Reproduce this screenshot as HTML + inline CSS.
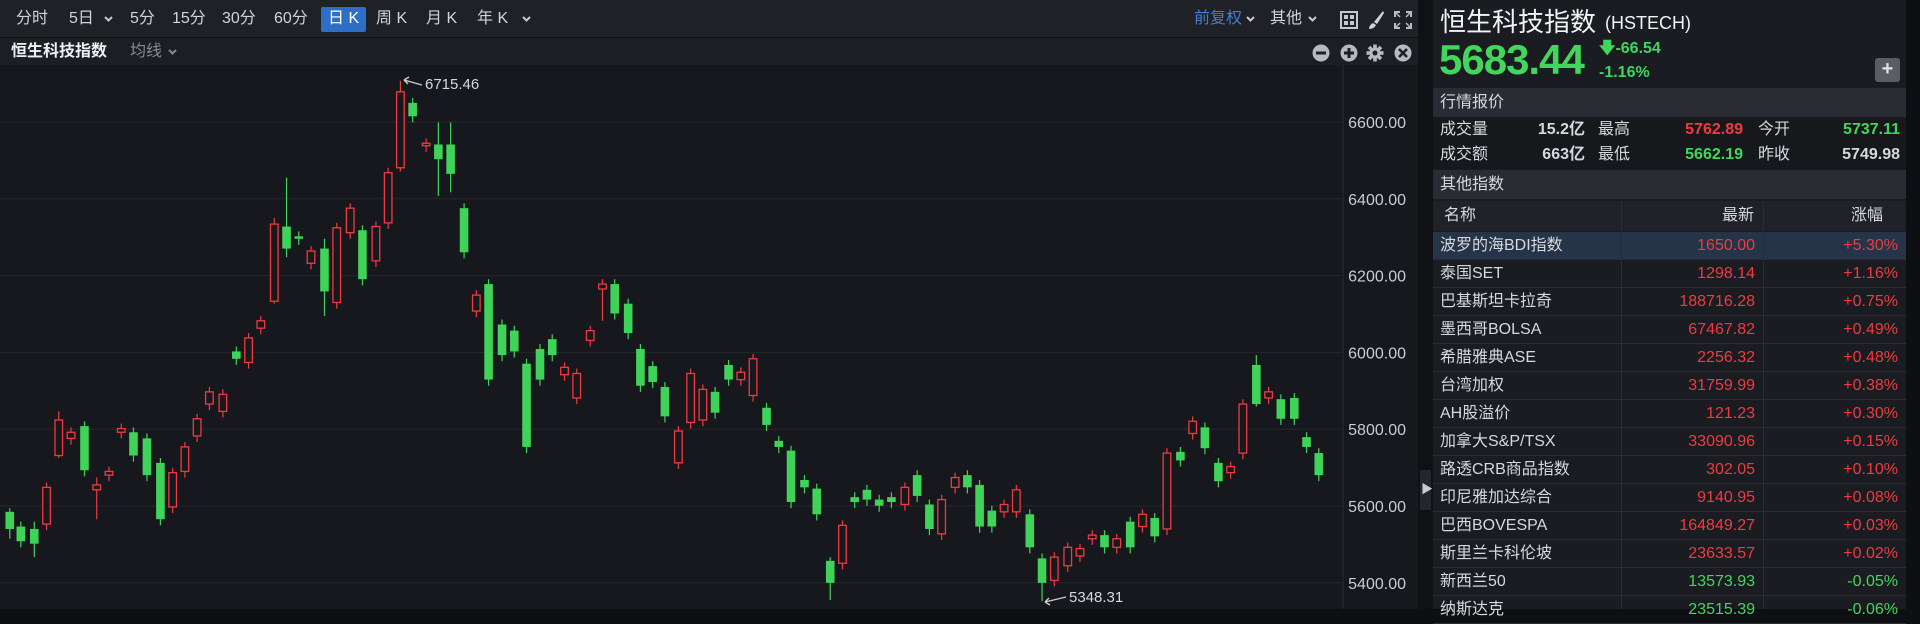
<!DOCTYPE html>
<html><head><meta charset="utf-8"><style>
*{margin:0;padding:0;box-sizing:border-box}
body{width:1920px;height:609px;background:#0e0f12;overflow:hidden;position:relative;font-family:"Liberation Sans","Noto Sans CJK SC",sans-serif;color:#d6d8dd}
.a{position:absolute;white-space:nowrap}
#left{position:absolute;left:0;top:0;width:1418px;height:609px;background:#17181d}
#tb{position:absolute;left:0;top:0;width:1418px;height:37px;background:#1f2126}
#sb{position:absolute;left:0;top:37px;width:1418px;height:28px;background:#1c1e23;border-top:1px solid #111}
.t{font-size:16px;color:#d0d3d9;top:8px;line-height:22px}
.chev{position:absolute}
#right{position:absolute;left:1433px;top:0;width:473px;height:609px;background:#1b1c21}
.band{position:absolute;left:0;width:473px;background:#2a2c33;font-size:16px;color:#d6d8dd;padding-left:7px}
.r{text-align:right}
.g{color:#41d65c}.rd{color:#f03a3f}
.q{font-size:16px;line-height:22px}
.row{position:absolute;left:0;width:473px;height:28px;border-bottom:1px solid #2a2c32;font-size:16px}
.row span{position:absolute;top:3px;line-height:22px}
</style></head><body>
<div id="left">
 <div id="tb">
  <span class="a t" style="left:16px">分时</span>
  <span class="a t" style="left:69px">5日</span><svg class="chev" style="left:104px;top:16px" width="9" height="6"><path d="M1 1L4.5 4.5L8 1" stroke="#c8cbd1" stroke-width="2" fill="none"/></svg>
  <span class="a t" style="left:130px">5分</span>
  <span class="a t" style="left:172px">15分</span>
  <span class="a t" style="left:222px">30分</span>
  <span class="a t" style="left:274px">60分</span>
  <div class="a" style="left:321px;top:7px;width:45px;height:25px;background:#2d6fc7;border-radius:2px"></div>
  <span class="a t" style="left:328px;color:#fff">日 K</span>
  <span class="a t" style="left:376px">周 K</span>
  <span class="a t" style="left:426px">月 K</span>
  <span class="a t" style="left:477px">年 K</span><svg class="chev" style="left:522px;top:16px" width="9" height="6"><path d="M1 1L4.5 4.5L8 1" stroke="#c8cbd1" stroke-width="2" fill="none"/></svg>
  <span class="a t" style="left:1194px;color:#3f7fd6">前复权</span><svg class="chev" style="left:1246px;top:16px" width="9" height="6"><path d="M1 1L4.5 4.5L8 1" stroke="#c8cbd1" stroke-width="2" fill="none"/></svg>
  <span class="a t" style="left:1270px">其他</span><svg class="chev" style="left:1308px;top:16px" width="9" height="6"><path d="M1 1L4.5 4.5L8 1" stroke="#c8cbd1" stroke-width="2" fill="none"/></svg>
  <svg class="a" style="left:1340px;top:11px" width="18" height="18"><rect x="1" y="1" width="16" height="16" fill="none" stroke="#c5c8ce" stroke-width="2"/><rect x="4" y="4" width="4" height="4" fill="#c5c8ce"/><rect x="10" y="4" width="4" height="4" fill="#c5c8ce"/><rect x="4" y="10" width="4" height="4" fill="#c5c8ce"/><rect x="10" y="10" width="4" height="4" fill="#c5c8ce"/></svg>
  <svg class="a" style="left:1367px;top:10px" width="18" height="20"><path d="M16 1 L7 12 L10 14 L17 3Z" fill="#d0d3d8"/><path d="M6 13 Q2 15 2 19 Q7 19 9 15Z" fill="#d0d3d8"/></svg>
  <svg class="a" style="left:1394px;top:11px" width="18" height="18" stroke="#b8bbc2" stroke-width="2" fill="none"><path d="M1 6V1H6M12 1H17V6M17 12V17H12M6 17H1V12"/><path d="M2 2L6 6M16 2L12 6M16 16L12 12M2 16L6 12" stroke-width="1.5"/></svg>
 </div>
 <div id="sb">
  <span class="a" style="left:11px;top:3px;font-size:16px;line-height:22px;font-weight:bold;color:#eef0f3">恒生科技指数</span>
  <span class="a" style="left:130px;top:3px;font-size:16px;line-height:22px;color:#888b92">均线</span><svg class="chev" style="left:168px;top:11px" width="9" height="6"><path d="M1 1L4.5 4.5L8 1" stroke="#888b92" stroke-width="2" fill="none"/></svg>
  <svg class="a" style="left:1312px;top:6px" width="100" height="20">
   <circle cx="9" cy="9" r="8.5" fill="#b6b9c0"/><rect x="4" y="7.5" width="10" height="3" fill="#1c1e23"/>
   <circle cx="37" cy="9" r="8.5" fill="#b6b9c0"/><rect x="32" y="7.5" width="10" height="3" fill="#1c1e23"/><rect x="35.5" y="4" width="3" height="10" fill="#1c1e23"/>
   <g transform="translate(63,9)"><circle r="5.5" fill="#b6b9c0"/><g fill="#b6b9c0"><rect x="-1.8" y="-8.5" width="3.6" height="17"/><rect x="-8.5" y="-1.8" width="17" height="3.6"/><rect x="-1.8" y="-8.5" width="3.6" height="17" transform="rotate(45)"/><rect x="-1.8" y="-8.5" width="3.6" height="17" transform="rotate(-45)"/></g><circle r="2.5" fill="#1c1e23"/></g>
   <circle cx="91" cy="9" r="8.5" fill="#b6b9c0"/><path d="M87 5L95 13M95 5L87 13" stroke="#1c1e23" stroke-width="2.6"/>
  </svg>
 </div>
 <svg id="ch" class="a" style="left:0;top:65px" width="1418" height="544"></svg>
</div>
<div class="a" style="left:1418px;top:0;width:15px;height:609px;background:#101114"></div>
<div class="a" style="left:1420px;top:470px;width:11px;height:40px;background:#24262b"></div>
<span class="a" style="left:1421px;top:480px;font-size:12px;color:#c8cbd1">▶</span>
<div id="right">
 <span class="a" style="left:7px;top:4px;font-size:26px;line-height:36px;color:#f2f3f5">恒生科技指数</span>
 <span class="a" style="left:172px;top:12px;font-size:18px;line-height:22px;color:#f2f3f5">(HSTECH)</span>
 <span class="a g" style="left:6px;top:36px;font-size:42px;line-height:48px;font-weight:bold;letter-spacing:-1px">5683.44</span>
 <span class="a g" style="left:166px;top:39px;font-size:16px;line-height:20px;font-weight:bold">🡇-66.54</span>
 <span class="a g" style="left:166px;top:63px;font-size:16px;line-height:20px;font-weight:bold">-1.16%</span>
 <div class="a" style="left:442px;top:58px;width:25px;height:24px;background:#5a5d65;border-radius:3px;color:#e0e2e6;font-size:20px;text-align:center;line-height:23px;font-weight:bold">+</div>
 <div class="band" style="top:88px;height:29px;line-height:29px">行情报价</div>
 <div class="a" style="left:0;top:117px;width:473px;height:52px;background:#17181c"></div>
 <span class="a q" style="left:7px;top:119px">成交量</span>
 <span class="a q r" style="left:0;width:152px;top:119px;font-weight:bold">15.2亿</span>
 <span class="a q" style="left:165px;top:119px">最高</span>
 <span class="a q r rd" style="left:0;width:310px;top:119px;font-weight:bold">5762.89</span>
 <span class="a q" style="left:325px;top:119px">今开</span>
 <span class="a q r g" style="left:0;width:467px;top:119px;font-weight:bold">5737.11</span>
 <span class="a q" style="left:7px;top:144px">成交额</span>
 <span class="a q r" style="left:0;width:152px;top:144px;font-weight:bold">663亿</span>
 <span class="a q" style="left:165px;top:144px">最低</span>
 <span class="a q r g" style="left:0;width:310px;top:144px;font-weight:bold">5662.19</span>
 <span class="a q" style="left:325px;top:144px">昨收</span>
 <span class="a q r" style="left:0;width:467px;top:144px;font-weight:bold">5749.98</span>
 <div class="band" style="top:170px;height:29px;line-height:29px">其他指数</div>
 <div class="a" style="left:0;top:201px;width:473px;height:30px;background:#202227"></div>
 <span class="a q" style="left:11px;top:205px">名称</span>
 <span class="a q" style="left:289px;top:205px">最新</span>
 <span class="a q" style="left:418px;top:205px">涨幅</span>
 <div id="tbl"></div>
 <div class="a" style="left:188px;top:201px;width:1px;height:408px;background:#2a2c32"></div>
 <div class="a" style="left:330px;top:201px;width:1px;height:408px;background:#2a2c32"></div>
</div>
<script>
var rows=[["波罗的海BDI指数","1650.00","+5.30%",1],["泰国SET","1298.14","+1.16%",1],["巴基斯坦卡拉奇","188716.28","+0.75%",1],["墨西哥BOLSA","67467.82","+0.49%",1],["希腊雅典ASE","2256.32","+0.48%",1],["台湾加权","31759.99","+0.38%",1],["AH股溢价","121.23","+0.30%",1],["加拿大S&P/TSX","33090.96","+0.15%",1],["路透CRB商品指数","302.05","+0.10%",1],["印尼雅加达综合","9140.95","+0.08%",1],["巴西BOVESPA","164849.27","+0.03%",1],["斯里兰卡科伦坡","23633.57","+0.02%",1],["新西兰50","13573.93","-0.05%",0],["纳斯达克","23515.39","-0.06%",0]];
var h="";rows.forEach(function(r,i){var c=r[3]?"rd":"g";h+='<div class="row" style="top:'+(232+i*28)+'px;'+(i==0?'background:#26344a':'')+'"><span style="left:7px">'+r[0].replace(/&/g,"&amp;")+'</span><span class="'+c+'" style="right:151px">'+r[1]+'</span><span class="'+c+'" style="right:8px">'+r[2]+'</span></div>';});
document.getElementById("tbl").innerHTML=h;
var d=[[8,0,418,432,415,440],[17,0,430,442],[28,0,432,444,426,455],[38,1,398,428],[48,1,343,372,336,374],[58,1,353,358],[69,0,348,384],[79,1,396,400,390,424],[89,1,385,388],[99,1,350,353],[109,0,353,372],[120,0,358,388],[131,0,378,424],[141,1,386,414],[151,1,365,385],[161,1,342,356],[171,1,320,330],[182,1,322,336],[193,0,287,293],[203,1,276,296],[213,1,262,268],[224,1,183,246,178,248],[234,0,185,203,145,210],[244,0,193,195],[254,1,205,215],[265,0,203,238,195,258],[275,1,186,247],[286,1,170,190],[296,0,188,228],[307,1,185,213],[317,1,141,182],[327,1,75,137,66,140],[337,0,84,95],[348,1,117,119],[358,0,118,130,100,160],[368,0,118,142,100,157],[379,0,170,206],[389,1,241,254],[399,0,232,310],[410,0,265,290],[420,0,270,287],[430,0,297,365],[441,0,285,310],[451,0,277,290],[461,1,300,306],[471,1,305,325],[482,1,270,278],[492,1,232,236,228,262],[502,0,232,256],[513,0,248,272],[523,0,285,315],[533,0,299,312],[543,0,316,340],[554,1,352,378],[564,1,305,345],[574,1,318,343],[584,0,320,337],[595,0,298,310],[605,1,304,310],[615,1,293,323],[626,0,333,347],[636,0,360,365],[646,0,368,410],[657,0,392,398],[667,0,399,420],[678,0,458,476,455,490],[688,1,429,460],[698,0,406,410],[708,0,400,408],[718,0,408,413],[728,0,406,410],[739,1,398,412],[749,0,388,405],[759,0,412,432],[769,1,408,436],[780,1,390,398],[790,0,388,398],[800,0,396,430],[810,0,417,430],[820,1,412,418],[830,1,400,418],[841,0,420,447],[851,0,456,476,452,491],[861,1,455,474],[872,1,447,462],[882,1,448,454],[892,1,437,440],[902,0,437,447],[912,1,440,447],[923,0,426,447],[933,1,420,430],[943,0,423,438],[953,1,370,432],[964,0,369,376],[974,1,344,354],[984,0,349,366],[995,0,378,393],[1005,1,381,386],[1015,1,330,370],[1026,0,298,330,290,332],[1036,1,320,325],[1046,0,326,342],[1057,0,325,342],[1067,0,357,365],[1077,0,370,388]];
var s=1.2245,oy=65,g="";
var labs=["6600.00","6400.00","6200.00","6000.00","5800.00","5600.00","5400.00"];
labs.forEach(function(l,i){var y=122+i*76.8-oy;g+='<line x1="0" x2="1343" y1="'+y+'" y2="'+y+'" stroke="#25272c"/><text x="1406" y="'+(y+6)+'" fill="#c9ccd2" font-size="16" text-anchor="end" font-family="Liberation Sans">'+l+'</text>';});
g+='<line x1="1343" x2="1343" y1="0" y2="544" stroke="#2a2c31"/>';
d.forEach(function(c){var x=c[0]*s,t=c[2]*s-oy,b=c[3]*s-oy,hi=(c[4]||c[2]-4)*s-oy,lo=(c[5]||c[3]+5)*s-oy;var col=c[1]?"#ee3b3f":"#3fd35a";
g+='<line x1="'+x+'" x2="'+x+'" y1="'+hi+'" y2="'+lo+'" stroke="'+col+'" stroke-width="1.2"/>';
if(c[1])g+='<rect x="'+(x-3.8)+'" y="'+t+'" width="7.6" height="'+Math.max(b-t,1.5)+'" fill="#17181d" stroke="'+col+'" stroke-width="1.3"/>';
else g+='<rect x="'+(x-4.3)+'" y="'+t+'" width="8.6" height="'+Math.max(b-t,1.5)+'" fill="'+col+'"/>';});
g+='<path d="M404 15 L422 20 M404 15 L409 12 M404 15 L408 19" stroke="#ccc" stroke-width="1.4" fill="none"/><text x="425" y="24" fill="#d6d8dd" font-size="15" font-family="Liberation Sans">6715.46</text>';
g+='<path d="M1045 537 L1066 532 M1045 537 L1049 533 M1045 537 L1050 540" stroke="#ccc" stroke-width="1.4" fill="none"/><text x="1069" y="537" fill="#d6d8dd" font-size="15" font-family="Liberation Sans">5348.31</text>';
document.getElementById("ch").innerHTML=g;
</script>
</body></html>
